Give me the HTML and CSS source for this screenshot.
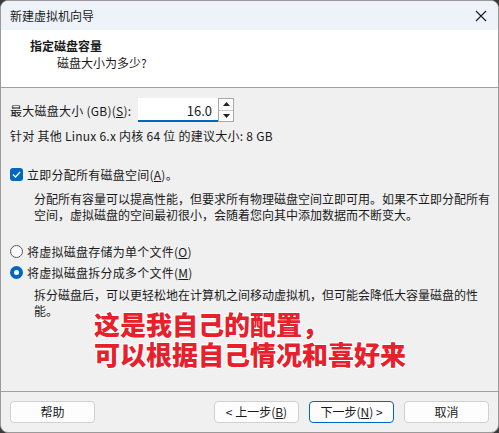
FILE: index.html
```html
<!DOCTYPE html>
<html lang="zh-CN">
<head>
  <meta charset="UTF-8" />
  <title>新建虚拟机向导</title>
  <link rel="stylesheet" href="styles.css">
</head>
<body>
  <div class="window">
    <div class="titlebar">
      <span class="title">新建虚拟机向导</span>
      <svg class="close" width="12" height="12" viewBox="0 0 12 12"><path d="M1 1L11 11M11 1L1 11" stroke="#1a1a1a" stroke-width="1.1"/></svg>
    </div>
    <div class="header">
      <div class="head-title">指定磁盘容量</div>
      <div class="head-sub">磁盘大小为多少?</div>
    </div>
    <div class="content">
      <div class="size-row">
        <span class="size-label">最大磁盘大小 (GB)(<u>S</u>):</span>
        <div class="spin">
          <div class="spin-input">16.0</div>
          <div class="spin-btns">
            <div class="spin-btn"><svg width="7" height="4" viewBox="0 0 7 4"><path d="M0 4L3.5 0L7 4Z" fill="#222"/></svg></div>
            <div class="spin-btn"><svg width="7" height="4" viewBox="0 0 7 4"><path d="M0 0L3.5 4L7 0Z" fill="#222"/></svg></div>
          </div>
        </div>
      </div>
      <div class="hint">针对 其他 Linux 6.x 内核 64 位 的建议大小: 8 GB</div>

      <div class="opt check-opt">
        <span class="checkbox"><svg width="9" height="7" viewBox="0 0 9 7"><path d="M1 3.5L3.5 6L8 1" stroke="#fff" stroke-width="1.4" fill="none"/></svg></span>
        <span>立即分配所有磁盘空间(<u>A</u>)。</span>
      </div>
      <div class="desc">分配所有容量可以提高性能，但要求所有物理磁盘空间立即可用。如果不立即分配所有<br>空间，虚拟磁盘的空间最初很小，会随着您向其中添加数据而不断变大。</div>

      <div class="opt radio-first">
        <span class="radio"></span>
        <span>将虚拟磁盘存储为单个文件(<u>O</u>)</span>
      </div>
      <div class="opt">
        <span class="radio on"></span>
        <span>将虚拟磁盘拆分成多个文件(<u>M</u>)</span>
      </div>
      <div class="desc desc-split">拆分磁盘后，可以更轻松地在计算机之间移动虚拟机，但可能会降低大容量磁盘的性<br>能。</div>

      <div class="note">这是我自己的配置，<br>可以根据自己情况和喜好来</div>
    </div>
    <div class="footer">
      <button class="btn">帮助</button>
      <div class="spacer"></div>
      <button class="btn">&lt; 上一步(<u>B</u>)</button>
      <button class="btn primary">下一步(<u>N</u>) &gt;</button>
      <button class="btn">取消</button>
    </div>
  </div>
</body>
</html>
```

FILE: styles.css
```css
* { margin: 0; padding: 0; box-sizing: border-box; }
body {
  font-family: "Noto Sans CJK SC", "Noto Sans", sans-serif;
  font-size: 12px;
  color: #1a1a1a;
  background: #3a3a3a;
  width: 499px;
  height: 433px;
  overflow: hidden;
}
.window {
  width: 499px;
  height: 433px;
  background: #f0f0f0;
  border: 1px solid #9a9a9a;
  border-radius: 8px;
  overflow: hidden;
  display: flex;
  flex-direction: column;
}
.titlebar {
  height: 29px;
  background: #eef2f9;
  display: flex;
  align-items: center;
  justify-content: space-between;
  padding: 0 10px 0 9px;
}
.title { font-size: 12px; color: #1a1a1a; }
.close { margin-right: 1px; }
.header {
  background: #fff;
  height: 58px;
  border-bottom: 1px solid #a0a0a0;
  padding: 7px 0 0 29px;
}
.head-title { font-weight: bold; font-size: 12px; line-height: 17px; }
.head-sub { padding-left: 27px; line-height: 17px; }
.content {
  flex: 1;
  padding: 10px 0 0 9px;
  border-bottom: 1px solid #a0a0a0;
  letter-spacing: 0.25px;
}
.size-row {
  display: flex;
  align-items: center;
  gap: 4px;
  height: 24px;
}
.size-label { width: 124px; }
.spin { display: flex; align-items: stretch; height: 24px; }
.spin-input {
  width: 80px;
  background: #fff;
  border-bottom: 2px solid #0067c0;
  text-align: right;
  padding: 3px 6px 0 0;
  font-size: 13px;
  letter-spacing: 0;
}
.spin-btns {
  width: 16px;
  border: 1px solid #a8a8a8;
  display: flex;
  flex-direction: column;
  background: #fdfdfd;
}
.spin-btn {
  flex: 1;
  display: flex;
  align-items: center;
  justify-content: center;
}
.spin-btn + .spin-btn { border-top: 1px solid #c8c8c8; }
.hint { margin-top: 5px; line-height: 17px; }
.opt {
  display: flex;
  align-items: center;
  gap: 4px;
  line-height: 17px;
}
.check-opt { margin-top: 22px; }
.radio-first { margin-top: 20px; }
.opt + .opt { margin-top: 4px; }
.checkbox {
  width: 13px;
  height: 13px;
  border-radius: 3px;
  background: #0067c0;
  display: flex;
  align-items: center;
  justify-content: center;
}
.radio {
  width: 13px;
  height: 13px;
  border-radius: 50%;
  border: 1px solid #5a5a5a;
  background: #fbfbfb;
}
.radio.on {
  border: 4px solid #0067c0;
  background: #fff;
}
.desc {
  padding: 8px 0 0 24px;
  line-height: 16px;
  white-space: nowrap;
  letter-spacing: 0;
}
.desc-split { padding-top: 6px; }
.note {
  margin: -10px 0 0 84px;
  font-size: 26px;
  font-weight: 900;
  line-height: 30px;
  letter-spacing: 0;
  color: #e8202c;
  text-shadow: 1px 1px 0 #fff, -1px -1px 0 #fff, 1px -1px 0 #fff, -1px 1px 0 #fff, 0 0 3px #fff;
}
.footer {
  height: 40px;
  display: flex;
  align-items: center;
  padding: 0 9px 1px 9px;
  gap: 10px;
}
.spacer { flex: 1; }
.btn {
  width: 85px;
  height: 22px;
  font-family: inherit;
  font-size: 12px;
  background: #fdfdfd;
  border: 1px solid #d0d0d0;
  border-radius: 4px;
  color: #1a1a1a;
}
.btn.primary { border-color: #0067c0; }
u { text-decoration: underline; }
```
